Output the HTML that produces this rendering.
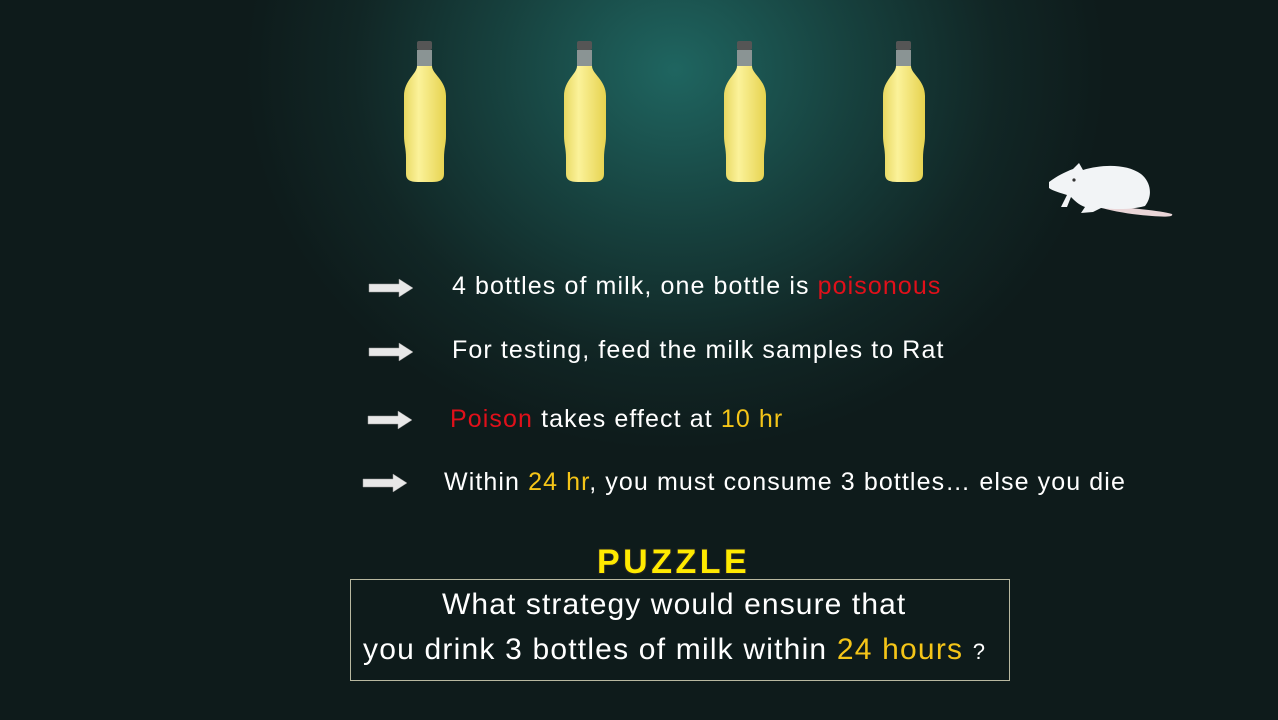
<!DOCTYPE html>
<html><head><style>
body{margin:0;width:1278px;height:720px;overflow:hidden;background:radial-gradient(ellipse 430px 380px at 675px 70px,#1f6560 0%,#17423f 40%,#112625 75%,#0e1b1b 100%);font-family:"Liberation Sans",sans-serif;color:#fff;position:relative}
.t{position:absolute;white-space:nowrap;font-size:25px;letter-spacing:1.1px}
.r{color:#e0101a}.y{color:#f5c518}
.box{position:absolute;left:350px;top:579px;width:658px;height:100px;border:1px solid #b8b8a0}
.q{position:absolute;font-size:30px;white-space:nowrap;letter-spacing:1.1px}
.pz{position:absolute;left:597px;top:543px;font-size:34px;font-weight:bold;color:#ffea00;text-shadow:1px 1px 0 #222,-1px -1px 0 #222,1px -1px 0 #222,-1px 1px 0 #222;letter-spacing:3.5px;font-family:"Liberation Sans",sans-serif}
</style></head><body>
<svg width="0" height="0" style="position:absolute"><defs>
<linearGradient id="bg1" x1="0" x2="1"><stop offset="0" stop-color="#e8d860"/><stop offset="0.35" stop-color="#fbf29a"/><stop offset="1" stop-color="#e6d24e"/></linearGradient>
<g id="bot"><rect x="13" y="0" width="15" height="9" rx="2" fill="#555"/><path d="M13 9h15v16c0 8 14 14 14 30v40c0 8-2 12-2 22v16c0 6-4 8-12 8h-14c-8 0-12-2-12-8v-16c0-10-2-14-2-22V55c0-16 13-22 13-30z" fill="url(#bg1)"/><path d="M13 9h15v16h-15z" fill="#8a9494"/></g>
<g id="ar"><path d="M0 5h30V0l14 9-14 9v-5H0z" fill="#e8e8e8" stroke="#999" stroke-width="0.5"/></g>
</defs></svg>
<svg style="position:absolute;left:0;top:0" width="1278" height="720">
<use href="#bot" x="404" y="41"/><use href="#bot" x="564" y="41"/><use href="#bot" x="724" y="41"/><use href="#bot" x="883" y="41"/>
<g transform="translate(1048,160)">
<path d="M54 44c20 4 58 6 70 10 2 3-8 3-20 2-16-1-36-4-50-8z" fill="#ead6d8"/>
<path d="M1 22c8-6 16-10 24-13l6-6 4 7c20-6 44-6 58 4 10 8 12 22 4 32-10 3-26 4-44 2l-8 4-12 1 4-6c-6-2-10-6-14-10l-4 10h-6l6-12c-6-2-14-4-18-7z" fill="#f2f4f6"/>
<circle cx="26" cy="20" r="1.6" fill="#333"/></g>
<use href="#ar" x="369" y="279"/><use href="#ar" x="369" y="343"/><use href="#ar" x="368" y="411"/><use href="#ar" x="363" y="474"/>
</svg>
<div class="t" style="left:452px;top:272px">4 bottles of milk, one bottle is <span class="r">poisonous</span></div>
<div class="t" style="left:452px;top:336px">For testing, feed the milk samples to Rat</div>
<div class="t" style="left:450px;top:405px"><span class="r">Poison</span> takes effect at <span class="y">10 hr</span></div>
<div class="t" style="left:444px;top:468px">Within <span class="y">24 hr</span>, you must consume 3 bottles… else you die</div>
<div class="pz">PUZZLE</div>
<div class="box"></div>
<div class="q" style="left:442px;top:588px">What strategy would ensure that</div>
<div class="q" style="left:363px;top:633px;letter-spacing:1.2px">you drink 3 bottles of milk within <span class="y">24 hours</span> <span style="font-size:22px">?</span></div>
</body></html>
